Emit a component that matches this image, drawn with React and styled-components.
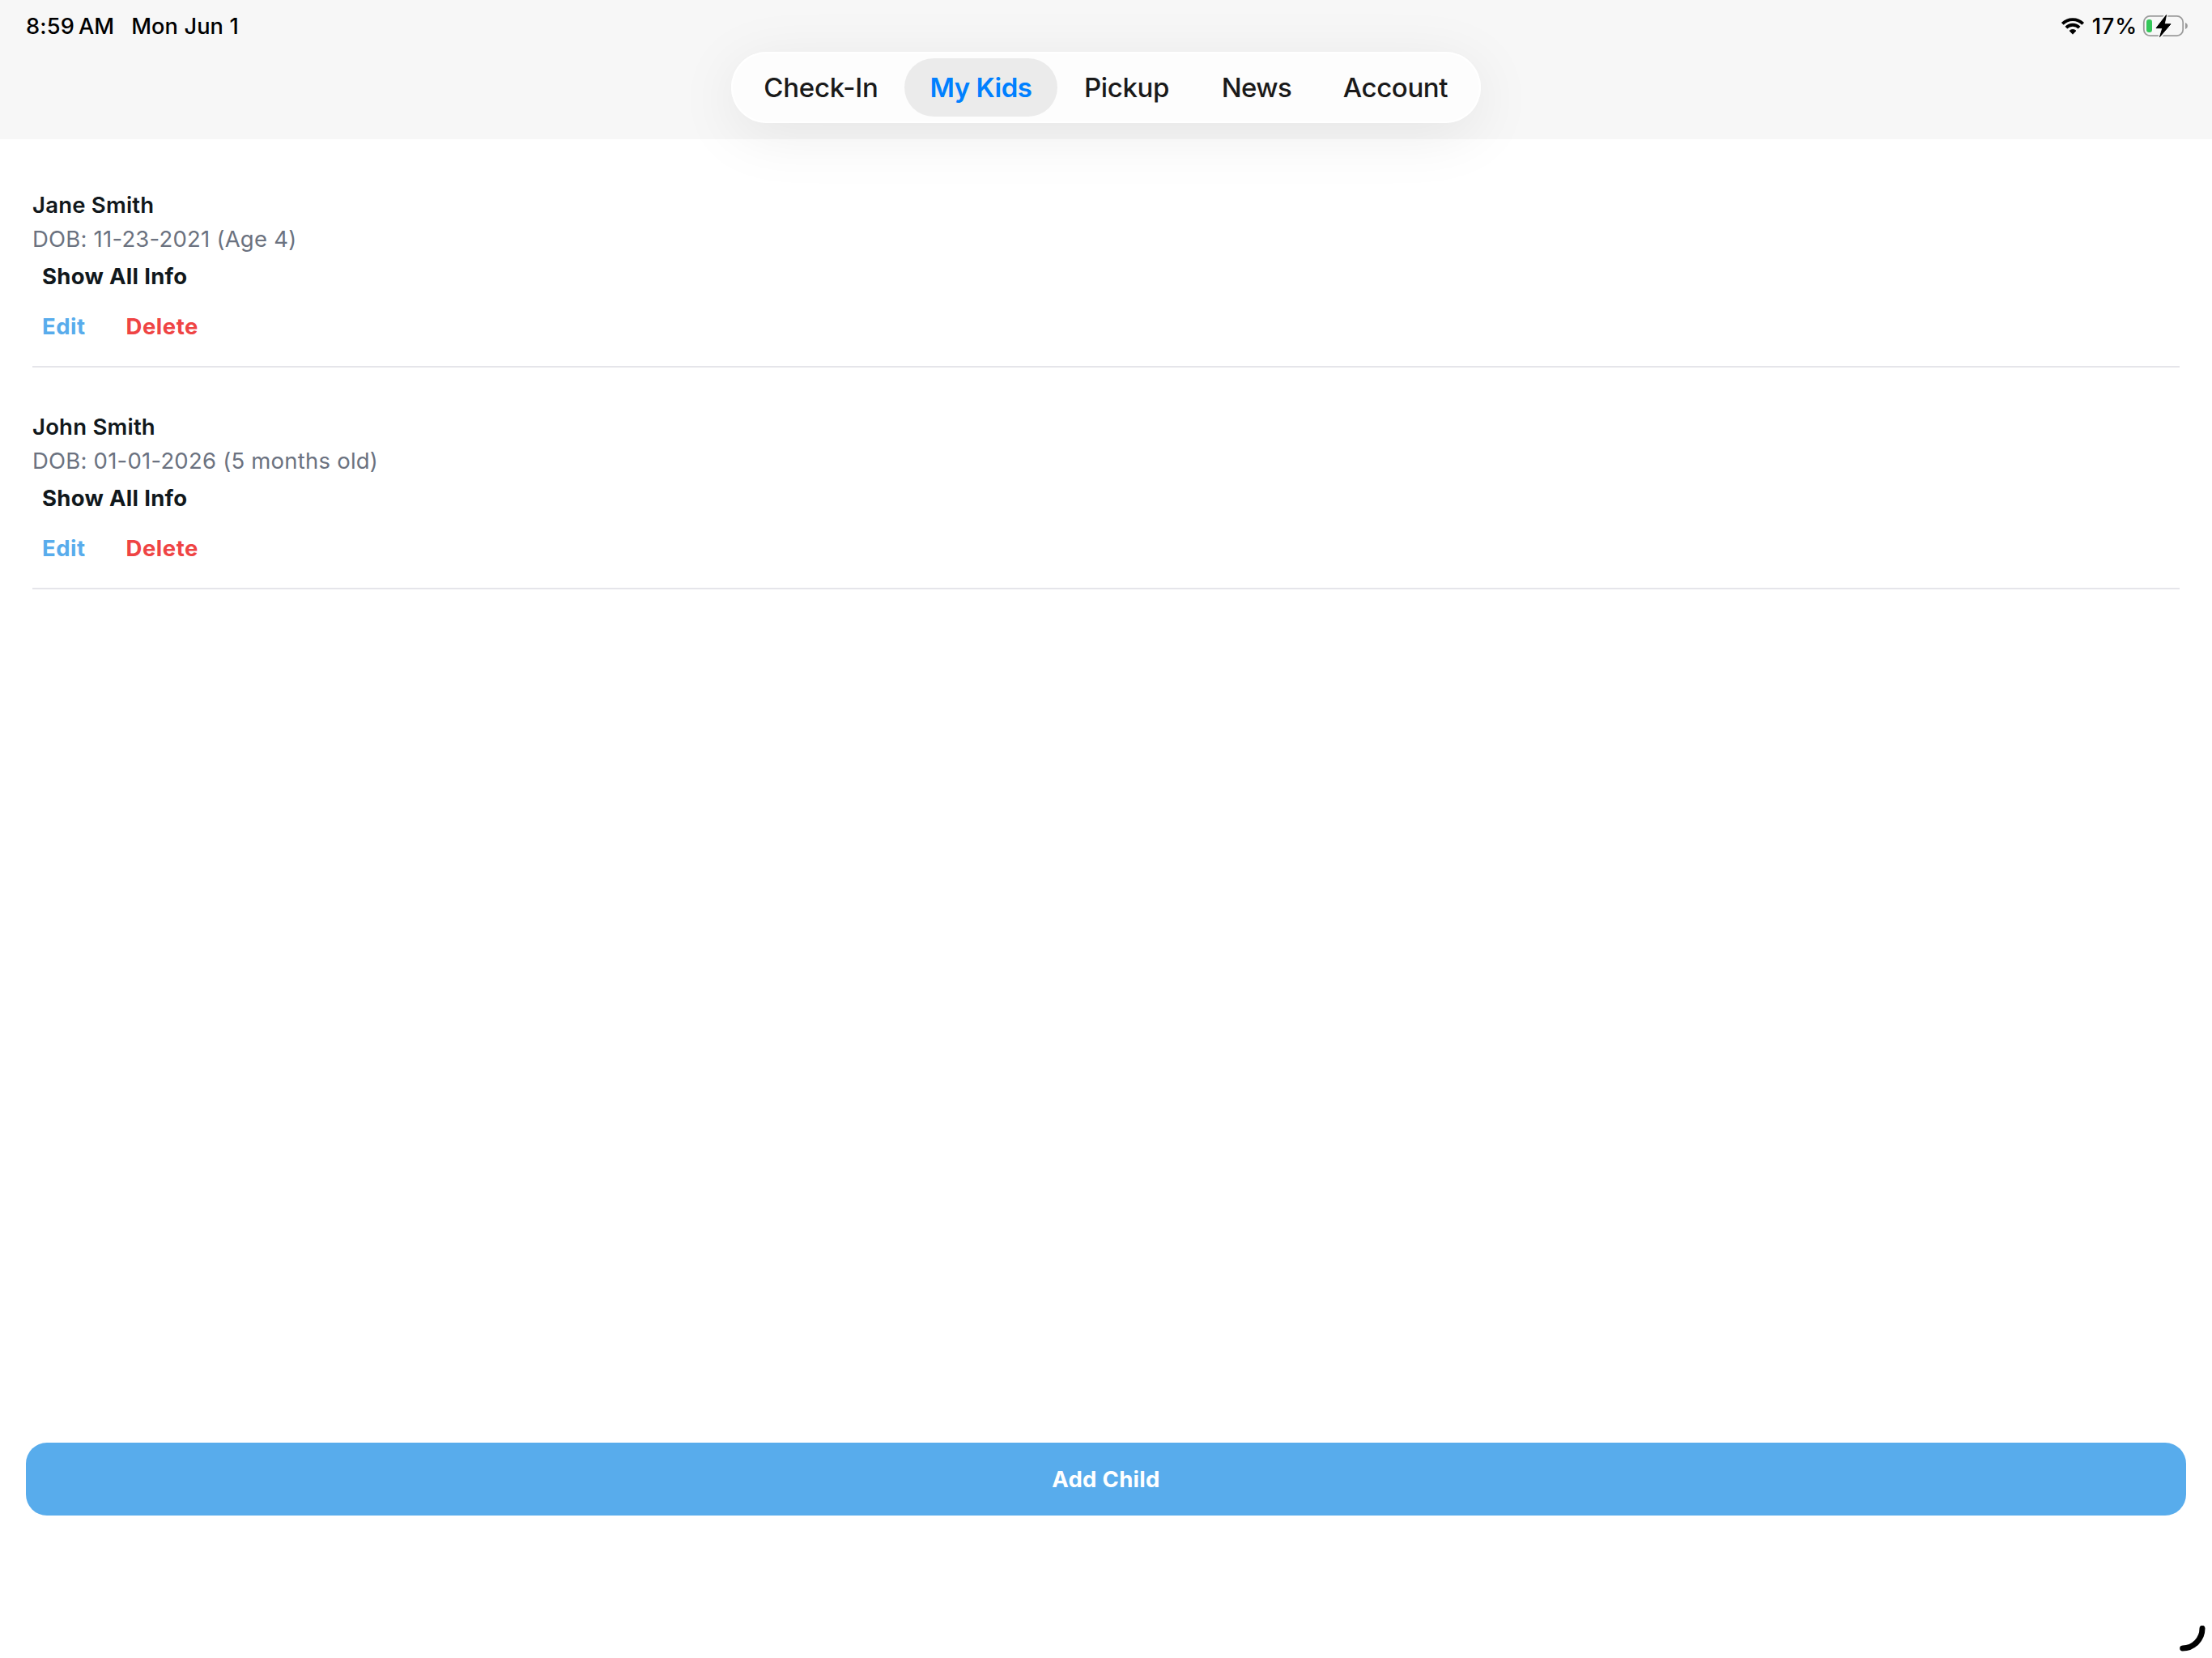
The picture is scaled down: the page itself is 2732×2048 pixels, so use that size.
import React, { useState } from 'react';
import styled, { createGlobalStyle } from 'styled-components';

const GlobalStyle = createGlobalStyle`
  * {
    box-sizing: border-box;
  }

  body {
    margin: 0;
    background-color: #ffffff;
    font-family: Inter, 'Liberation Sans', sans-serif;
  }

  button {
    margin: 0;
    padding: 0;
    border: none;
    background: none;
    font-family: inherit;
    cursor: pointer;
  }
`;

const Screen = styled.div`
  width: 2732px;
  height: 2048px;
  display: flex;
  flex-direction: column;
  position: relative;
  overflow: hidden;
`;

const Header = styled.header`
  height: 172px;
  flex-shrink: 0;
  background-color: #f7f7f7;
`;

const StatusBar = styled.div`
  height: 64px;
  padding: 0 30px 0 32px;
  display: flex;
  align-items: center;
  justify-content: space-between;
`;

const StatusGroup = styled.div`
  display: flex;
  align-items: center;
`;

const StatusText = styled.span`
  padding-top: 1px;
  font-size: 27.2px;
  font-weight: 500;
  line-height: 64px;
  color: #000000;
  white-space: nowrap;
  letter-spacing: ${({ $tracking }) => $tracking || 0}px;
  margin-left: ${({ $gap }) => $gap || 0}px;
`;

const StatusIcon = styled.svg`
  display: block;
  flex-shrink: 0;
  margin-left: ${({ $gap }) => $gap || 0}px;
`;

const TabBar = styled.nav`
  width: 926px;
  height: 88px;
  margin: 0 auto;
  padding: 8px;
  display: flex;
  border-radius: 44px;
  background-color: #fdfdfd;
  box-shadow: inset 0 0 0 2px #ffffff, 0 14px 76px rgba(0, 0, 0, 0.08);
`;

const Tab = styled.button`
  width: ${({ $width }) => $width}px;
  height: 72px;
  border-radius: 36px;
  font-size: 33px;
  line-height: 72px;
  white-space: nowrap;
  font-weight: ${({ $active }) => ($active ? 600 : 500)};
  letter-spacing: ${({ $tracking }) => $tracking}px;
  color: ${({ $active }) => ($active ? '#0080ff' : '#1a1a1a')};
  background-color: ${({ $active }) => ($active ? '#ebebeb' : 'transparent')};
`;

const ChildList = styled.main`
  flex: 1;
  padding: 8px 40px 0;
`;

const ChildRow = styled.section`
  height: 274px;
  padding-top: 52px;
  border-bottom: 2px solid #e5e5ea;
`;

const ChildName = styled.h2`
  margin: 0;
  font-size: 27.5px;
  font-weight: 600;
  line-height: 42px;
  letter-spacing: 0.22px;
  color: #11181c;
`;

const ChildBirth = styled.p`
  margin: 0;
  font-size: 27.5px;
  line-height: 42px;
  letter-spacing: 0.22px;
  color: #6b7280;
`;

const Actions = styled.div`
  height: ${({ $height }) => $height}px;
  padding-left: 12px;
  display: flex;
  align-items: center;
  gap: 50px;
`;

const TextButton = styled.button`
  font-size: 27.5px;
  font-weight: 700;
  line-height: 42px;
  letter-spacing: ${({ $tracking }) => $tracking || 0.3}px;
  color: ${({ $color }) => $color || '#11181c'};
`;

const Footer = styled.footer`
  height: 266px;
  padding: 0 32px;
`;

const AddButton = styled.button`
  width: 100%;
  height: 90px;
  border-radius: 26px;
  background-color: #58acec;
  color: #ffffff;
  font-size: 27.5px;
  font-weight: 700;
  letter-spacing: 0.3px;
`;

const CornerHandle = styled.svg`
  position: absolute;
  right: 4px;
  bottom: 4px;
`;

const tabs = [
  { label: 'Check-In', width: 206, tracking: -0.25 },
  { label: 'My Kids', width: 189, tracking: -0.5 },
  { label: 'Pickup', width: 171, tracking: -0.35 },
  { label: 'News', width: 150, tracking: -0.6 },
  { label: 'Account', width: 193, tracking: -0.4 },
];

const kids = [
  { name: 'Jane Smith', birth: '11-23-2021', age: 'Age 4' },
  { name: 'John Smith', birth: '01-01-2026', age: '5 months old' },
];

const WifiIcon = () => (
  <StatusIcon width="30" height="24" viewBox="0 0 30 24">
    <g fill="none" stroke="#000000" strokeWidth="3.9">
      <path d="M2.3 9.4a18 18 0 0 1 25.4 0" />
      <path d="M6.9 14.1a11.5 11.5 0 0 1 16.2 0" />
    </g>
    <path
      d="M15 22.2l-4-4.200a5.800 5.800 0 0 1 8 0z"
      stroke="#000000"
      strokeWidth="0.8"
      strokeLinejoin="round"
    />
  </StatusIcon>
);

const BatteryIcon = () => (
  <StatusIcon $gap={6} width="56" height="30" viewBox="0 0 56 30">
    <rect x="1.8" y="2.8" width="48.4" height="24.4" rx="7.6" fill="none" stroke="#9b9b9b" strokeWidth="1.8" />
    <path d="M53 11v8c1.8-.7 2.9-2.2 2.9-4s-1.1-3.300-2.9-4z" fill="#9b9b9b" />
    <rect x="5" y="7" width="7" height="16" rx="3.2" fill="#34c759" />
    <path
      d="M29.600 1.500L17 17.700h7.800L21.500 28.500 35 12.700h-7.700z"
      fill="#000000"
      stroke="#f7f7f7"
      strokeWidth="4"
      strokeLinejoin="round"
      paintOrder="stroke"
    />
    <path
      d="M29.600 1.500L17 17.700h7.800L21.500 28.500 35 12.700h-7.700z"
      stroke="#000000"
      strokeWidth="0.8"
      strokeLinejoin="round"
    />
  </StatusIcon>
);

const ChildItem = ({ name, birth, age }) => (
  <ChildRow>
    <ChildName>{name}</ChildName>
    <ChildBirth>{`DOB: ${birth} (${age})`}</ChildBirth>
    <Actions $height={50}>
      <TextButton>Show All Info</TextButton>
    </Actions>
    <Actions $height={73}>
      <TextButton $color="#58acec" $tracking={0.5}>
        Edit
      </TextButton>
      <TextButton $color="#ef4444" $tracking={0.5}>
        Delete
      </TextButton>
    </Actions>
  </ChildRow>
);

const App = () => {
  const [activeTab, setActiveTab] = useState('My Kids');

  return (
    <>
      <GlobalStyle />
      <Screen>
        <Header>
          <StatusBar>
            <StatusGroup>
              <StatusText $tracking={0.2}>8:59</StatusText>
              <StatusText $gap={5}>AM</StatusText>
              <StatusText $gap={21} $tracking={0.1}>
                Mon Jun 1
              </StatusText>
            </StatusGroup>
            <StatusGroup>
              <WifiIcon />
              <StatusText $gap={9} $tracking={0.8}>
                17%
              </StatusText>
              <BatteryIcon />
            </StatusGroup>
          </StatusBar>
          <TabBar>
            {tabs.map(({ label, width, tracking }) => (
              <Tab
                key={label}
                $width={width}
                $tracking={tracking}
                $active={label === activeTab}
                onClick={() => setActiveTab(label)}
              >
                {label}
              </Tab>
            ))}
          </TabBar>
        </Header>
        <ChildList>
          {kids.map((kid) => (
            <ChildItem key={kid.name} {...kid} />
          ))}
        </ChildList>
        <Footer>
          <AddButton>Add Child</AddButton>
        </Footer>
        <CornerHandle width="36" height="36" viewBox="0 0 36 36">
          <path
            d="M28 3.300A24.500 24.500 0 0 1 3.700 28"
            fill="none"
            stroke="#000000"
            strokeWidth="7"
            strokeLinecap="round"
          />
        </CornerHandle>
      </Screen>
    </>
  );
};

export default App;
